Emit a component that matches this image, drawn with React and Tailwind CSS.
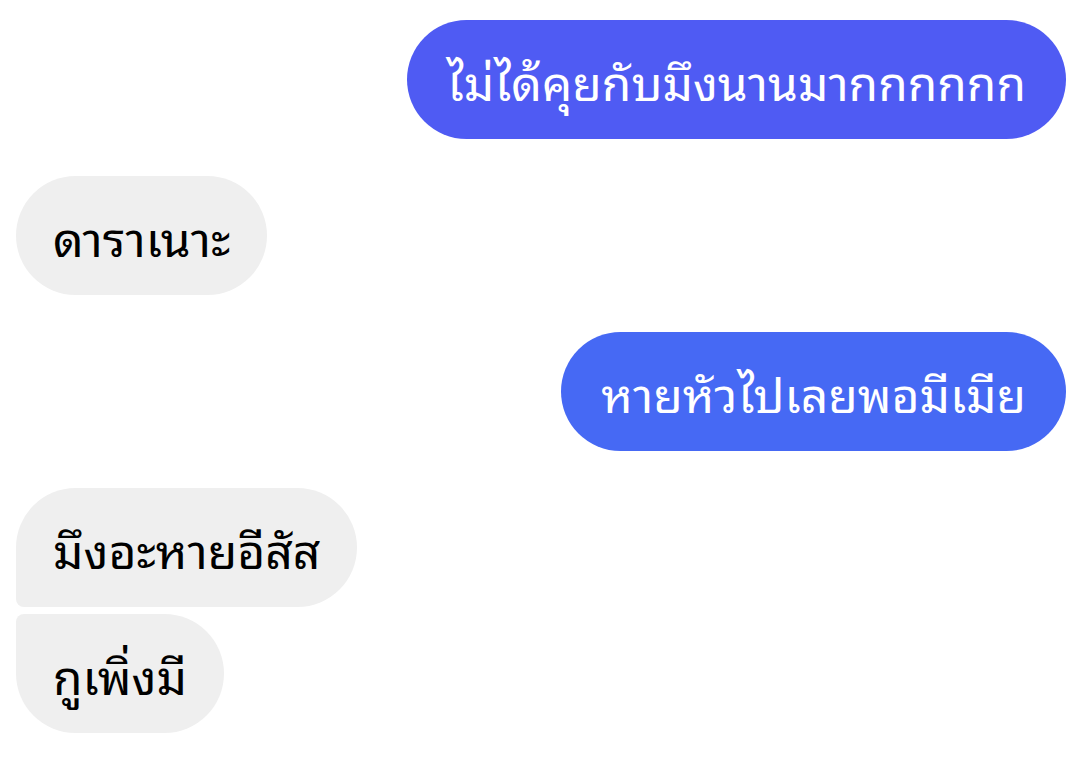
const MESSAGES = [
  { id: 1, text: "ไม่ได้คุยกับมึงนานมากกกกกก", mine: true, tone: "bg-[#4f5bf3]" },
  { id: 2, text: "ดาราเนาะ", mine: false, shape: "rounded-full" },
  { id: 3, text: "หายหัวไปเลยพอมีเมีย", mine: true, tone: "bg-[#4669f4]" },
  { id: 4, text: "มึงอะหายอีสัส", mine: false, shape: "rounded-[60px] rounded-bl-[8px]", tight: true },
  { id: 5, text: "กูเพิ่งมี", mine: false, shape: "rounded-[60px] rounded-tl-[8px]" },
];

export default function App() {
  return (
    <div
      className="w-[1090px] h-[766px] bg-white overflow-hidden flex flex-col pt-5 pr-6 pl-4"
      style={{ fontFamily: '"Noto Sans Thai Looped", "Noto Sans Thai", "Noto Sans", sans-serif' }}
    >
      {MESSAGES.map((m) => (
        <div
          key={m.id}
          className={`flex ${m.mine ? "justify-end" : "justify-start"} ${m.tight ? "mb-[7px]" : "mb-[37px]"}`}
        >
          <div
            className={
              m.mine
                ? `${m.tone} h-[119px] rounded-full px-[40px] flex items-center text-white text-[48px] leading-none`
                : `bg-[#efefef] h-[119px] ${m.shape} px-[37px] flex items-center text-black text-[48px] leading-none`
            }
          >
            {m.text}
          </div>
        </div>
      ))}
    </div>
  );
}
